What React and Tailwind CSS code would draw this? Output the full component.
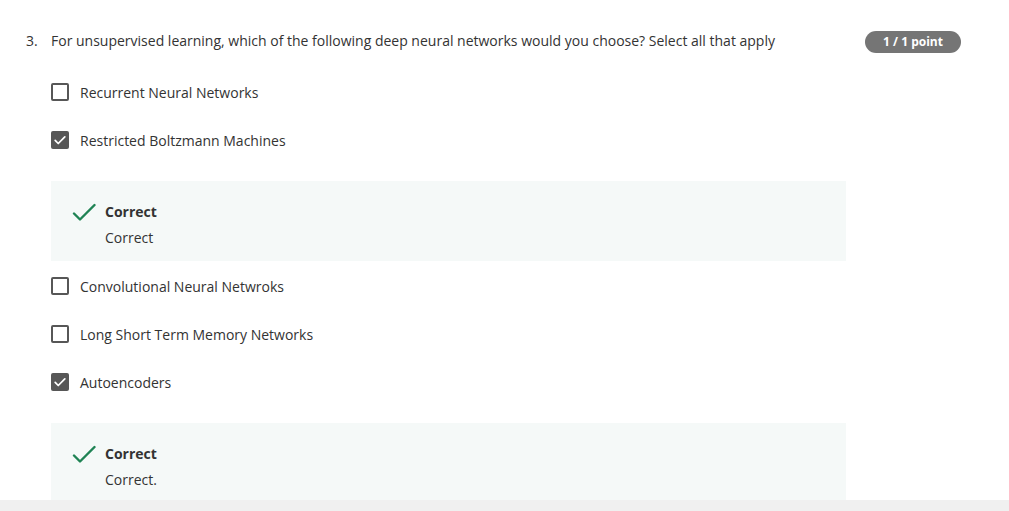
const OPTIONS = [
  { label: 'Recurrent Neural Networks', checked: false },
  { label: 'Restricted Boltzmann Machines', checked: true, feedback: 'Correct' },
  { label: 'Convolutional Neural Netwroks', checked: false },
  { label: 'Long Short Term Memory Networks', checked: false },
  { label: 'Autoencoders', checked: true, feedback: 'Correct.' },
]

function Box({ checked }) {
  if (checked) {
    return (
      <span className="flex h-[18px] w-[18px] shrink-0 items-center justify-center rounded-[2px] bg-[#575757]">
        <svg width="14" height="14" viewBox="0 0 16 16" fill="none">
          <path d="M2.5 8.5l3.5 3.5 7.5-7.5" stroke="white" strokeWidth="2" strokeLinecap="round" strokeLinejoin="round" />
        </svg>
      </span>
    )
  }
  return <span className="h-[18px] w-[18px] shrink-0 rounded-[2px] border-2 border-[#575757] bg-white" />
}

function Feedback({ text }) {
  return (
    <div className="mt-[17px] mb-[1px] h-[80px] w-[795px] bg-[#f5f9f8] pl-[21px] pt-[20px]">
      <div className="flex items-center">
        <svg width="24" height="18" viewBox="0 0 24 18" fill="none" className="shrink-0">
          <path d="M2 10.5l6 6L22.5 2" stroke="#1f8354" strokeWidth="2.4" strokeLinecap="round" strokeLinejoin="round" />
        </svg>
        <span className="ml-[9px] text-[14px] font-bold text-[#333]">Correct</span>
      </div>
      <div className="ml-[33px] mt-[5px] text-[14px] text-[#333]">{text}</div>
    </div>
  )
}

export default function App() {
  return (
    <div className="relative h-[511px] w-[1009px] overflow-hidden bg-white font-['Open_Sans',sans-serif] text-[#333]">
      <div className="flex items-start pl-[26px] pt-[30px]">
        <span className="w-[25px] text-[14px] leading-[22px]">3.</span>
        <span className="text-[14px] leading-[22px]">
          For unsupervised learning, which of the following deep neural networks would you choose? Select all that apply
        </span>
        <span className="ml-auto mr-[48px] mt-[1px] flex h-[22px] w-[96px] items-center justify-center rounded-full bg-[#757575] text-[12px] font-bold text-white">
          1 / 1 point
        </span>
      </div>
      <div className="pl-[51px] pt-[15px]">
        {OPTIONS.map(o => (
          <div key={o.label}>
            <div className="flex h-[48px] items-center">
              <Box checked={o.checked} />
              <span className="ml-[11px] text-[14px]">{o.label}</span>
            </div>
            {o.feedback && <Feedback text={o.feedback} />}
          </div>
        ))}
      </div>
      <div className="absolute bottom-0 left-0 h-[11px] w-full bg-[#f0f0f0]" />
    </div>
  )
}
